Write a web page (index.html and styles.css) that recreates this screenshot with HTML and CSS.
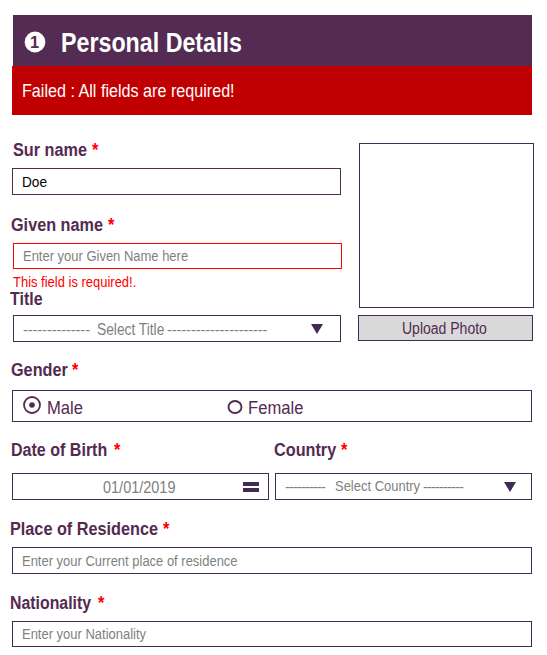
FILE: index.html
```html
<!DOCTYPE html>
<html lang="en">
<head>
<meta charset="utf-8">
<title>Personal Details</title>
<link rel="stylesheet" href="styles.css">
</head>
<body>
<form class="form">
  <header class="header">
    <svg class="step" viewBox="0 0 22 22"><circle cx="11" cy="11" r="10.4" fill="#fff"/><text x="10.6" y="17" text-anchor="middle" class="step-number">1</text></svg>
    <h1 class="heading">Personal Details</h1>
  </header>
  <div class="alert"><span class="narrow alert-text">Failed : All fields are required!</span></div>

  <div class="top">
    <div class="left">
      <div class="label label-surname"><span class="label-text">Sur name</span><span class="star">*</span></div>
      <div class="box surname"><span class="narrow value">Doe</span></div>
      <div class="label label-given"><span class="label-text">Given name</span><span class="star">*</span></div>
      <div class="box given"><span class="narrow hint hint-given">Enter your Given Name here</span></div>
      <div class="error"><span class="narrow">This field is required!.</span></div>
      <div class="label label-title"><span class="label-text">Title</span></div>
      <div class="box title">
        <span class="dashes dashes-a">--------------</span>
        <span class="narrow select-text">Select Title</span>
        <span class="dashes">---------------------</span>
        <svg class="arrow" viewBox="0 0 12 10"><path d="M0 0H12L6 10Z"/></svg>
      </div>
    </div>
    <div class="right">
      <div class="photo"></div>
      <div class="upload"><span class="narrow upload-text">Upload Photo</span></div>
    </div>
  </div>

  <div class="label label-gender"><span class="label-text">Gender</span><span class="star">*</span></div>
  <div class="box gender">
    <svg class="radio-on" viewBox="0 0 18 18"><circle cx="9" cy="9" r="8" fill="none" stroke="#542a52" stroke-width="1.8"/><circle cx="9" cy="9" r="2.8" fill="#542a52"/></svg>
    <span class="narrow option male">Male</span>
    <svg class="radio-off" viewBox="0 0 16 14"><ellipse cx="8" cy="7" rx="6.5" ry="6" fill="none" stroke="#542a52" stroke-width="1.9"/></svg>
    <span class="narrow option">Female</span>
  </div>

  <div class="pair">
    <div>
      <div class="label label-birth"><span class="label-text">Date of Birth</span><span class="star">*</span></div>
      <div class="box birth">
        <span class="narrow date">01/01/2019</span>
        <svg class="bars" viewBox="0 0 16 10"><path d="M0 0H16V4H0ZM0 6H16V10H0Z"/></svg>
      </div>
    </div>
    <div>
      <div class="label label-country"><span class="label-text">Country</span><span class="star">*</span></div>
      <div class="box country">
        <span class="dashes-tight dashes-c">----------</span>
        <span class="narrow country-text">Select Country</span>
        <span class="dashes-tight">----------</span>
        <svg class="arrow" viewBox="0 0 12 10"><path d="M0 0H12L6 10Z"/></svg>
      </div>
    </div>
  </div>

  <div class="label label-place"><span class="label-text">Place of Residence</span><span class="star">*</span></div>
  <div class="box place"><span class="narrow hint">Enter your Current place of residence</span></div>
  <div class="label label-nation"><span class="label-text">Nationality</span><span class="star">*</span></div>
  <div class="box nation"><span class="narrow hint">Enter your Nationality</span></div>
</form>
</body>
</html>
```
FILE: styles.css
```css
* { box-sizing: border-box; }

body {
  margin: 0;
  background: #fff;
  font-family: "Liberation Sans", Arial, sans-serif;
  color: #542a52;
}

.form {
  width: 547px;
  height: 655px;
  padding: 15px 0 0 12px;
  overflow: hidden;
}

svg { display: block; flex: none; fill: #3f2b53; }

/* Condensed text: drawn narrower than its natural advance width */
.narrow,
.heading,
.label-text,
.star {
  display: block;
  flex: none;
  white-space: nowrap;
  transform: scaleX(var(--s, 0.885));
  transform-origin: 0 50%;
}

.header {
  display: flex;
  align-items: center;
  width: 519px;
  height: 51px;
  margin-left: 1px;
  padding: 3px 0 0 11px;
  background: #542b52;
  color: #fff;
}

.step { width: 22px; height: 22px; }
.step-number { font-size: 16.5px; font-weight: bold; fill: #542b52; }

.heading {
  --s: 0.83;
  margin: 2px 0 0 15px;
  font-size: 28px;
  line-height: 32px;
}

.alert {
  display: flex;
  align-items: center;
  width: 520px;
  height: 49px;
  padding-left: 10px;
  background: #c00000;
  color: #fff;
}
.alert-text { --s: 0.865; font-size: 18.67px; }

.top { display: flex; justify-content: space-between; width: 522px; }
.left { width: 330px; }
.right { width: 176px; padding-top: 28px; }

.label {
  display: flex;
  height: 20px;
  font-size: 18.67px;
  font-weight: bold;
  line-height: 20px;
}
.label-text { --s: 0.87; width: var(--w); }
.star { --s: 0.875; color: #f00; }

.label-surname { --w: 79px; margin: 25px 0 8px 1px; }
.label-given { --w: 97px; margin: 20px 0 8px -1px; }
.label-title { margin: 0 0 6px -2px; }
.label-title .label-text { --s: 0.855; }
.label-gender { --w: 61px; margin: 18px 0 10px -1px; }
.label-birth { --w: 103px; margin: 18px 0 13px -1px; }
.label-birth .label-text { --s: 0.86; }
.label-country { --w: 67px; margin: 18px 0 13px -1px; }
.label-place { --w: 153px; margin: 19px 0 8px -2px; }
.label-nation { --w: 88px; margin: 19px 0 8px -2px; }
.label-nation .label-text { --s: 0.85; }

.box {
  display: flex;
  align-items: center;
  width: 520px;
  height: 27px;
  padding-left: 9px;
  border: 1px solid #3f2b53;
  color: #7f7f7f;
  font-size: 14.67px;
  line-height: 18px;
}

.surname { width: 329px; border-color: #542a52; }
.value { --s: 0.93; color: #000; }
.given { width: 329px; height: 26px; margin-left: 1px; border-color: #f00; }

.error {
  height: 15px;
  margin: 5px 0 0 1px;
  font-size: 14.67px;
  line-height: 16px;
  color: #f00;
}

.title { width: 328px; margin-left: 1px; font-size: 16px; }
.select-text { --s: 0.86; width: 70px; margin-left: 1px; padding-top: 2px; }
.dashes { padding-top: 3px; font-size: 14.67px; letter-spacing: -0.1px; }
.dashes-a { width: 73px; }
.arrow { width: 12px; height: 10px; margin-left: auto; margin-right: 17px; }

.photo { width: 175px; height: 165px; margin-left: 1px; border: 1px solid #3f2b53; }
.upload {
  display: flex;
  align-items: center;
  width: 175px;
  height: 26px;
  margin-top: 7px;
  padding: 1px 0 0 43px;
  border: 1px solid #3f2b53;
  background: #d9d9d9;
  font-size: 16px;
}
.upload-text { --s: 0.875; }

.gender { height: 32px; padding-left: 10px; color: #542a52; }
.radio-on { width: 18px; height: 18px; margin-top: -2px; }
.option { --s: 0.89; padding-top: 3px; font-size: 18.67px; line-height: 20px; }
.male { width: 180px; margin-left: 6px; }
.radio-off { width: 16px; height: 14px; margin: 2px 5px 0 0; }

.pair { display: flex; gap: 6px; }
.birth, .country { width: 257px; }
.date { --s: 0.905; width: 139px; margin-left: 81px; padding-top: 2px; font-size: 16px; }
.bars { width: 16px; height: 10px; margin-left: 1px; }
.dashes-tight { letter-spacing: -0.88px; }
.dashes-c { width: 50px; }
.country-text { --s: 0.865; width: 88px; margin-top: -1px; font-size: 15px; }
.country .arrow { margin-right: 15px; }
.nation { height: 26px; }
```
